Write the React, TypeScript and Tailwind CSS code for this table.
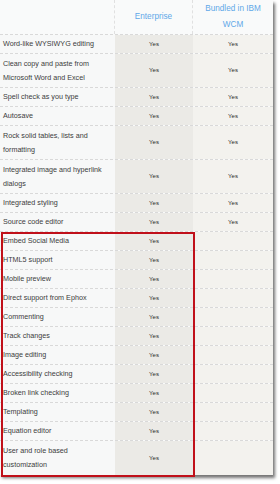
import React from "react";

type Row = { label: string[]; ent: boolean; ibm: boolean };

const top: Row[] = [
  { label: ["Word-like WYSIWYG editing"], ent: true, ibm: true },
  { label: ["Clean copy and paste from", "Microsoft Word and Excel"], ent: true, ibm: true },
  { label: ["Spell check as you type"], ent: true, ibm: true },
  { label: ["Autosave"], ent: true, ibm: true },
  { label: ["Rock solid tables, lists and", "formatting"], ent: true, ibm: true },
  { label: ["Integrated image and hyperlink", "dialogs"], ent: true, ibm: true },
  { label: ["Integrated styling"], ent: true, ibm: true },
  { label: ["Source code editor"], ent: true, ibm: true },
];

const bottom: Row[] = [
  "Embed Social Media",
  "HTML5 support",
  "Mobile preview",
  "Direct support from Ephox",
  "Commenting",
  "Track changes",
  "Image editing",
  "Accessibility checking",
  "Broken link checking",
  "Templating",
  "Equation editor",
]
  .map((l) => ({ label: [l], ent: true, ibm: false }))
  .concat([{ label: ["User and role based", "customization"], ent: true, ibm: false }]);

function TableRow({ row, last }: { row: Row; last?: boolean }) {
  const tall = row.label.length > 1;
  return (
    <div
      className={`flex ${tall ? "h-[34px]" : "h-[19px]"} ${
        last ? "" : "border-b border-dashed border-[#d9d9d9]"
      }`}
    >
      <div className="flex w-[115px] flex-col justify-center bg-[#f7f8f8] pl-[3px] text-[7.2px] leading-[14px] text-[#3c3c3c]">
        {row.label.map((l) => (
          <div key={l} className="whitespace-nowrap">
            {l}
          </div>
        ))}
      </div>
      <div className="flex w-[78px] items-center justify-center bg-[#ebeae6] text-[6px] text-[#2a2a2a]">
        {row.ent ? "Yes" : ""}
      </div>
      <div className="flex flex-1 items-center justify-center bg-[#f3f2ee] text-[6px] text-[#2a2a2a]">
        {row.ibm ? "Yes" : ""}
      </div>
    </div>
  );
}

export default function App() {
  return (
    <div className="h-[484px] w-[280px] bg-white" style={{ fontFamily: '"Liberation Sans", Arial, sans-serif' }}>
      <div className="w-[273px] bg-[#f9fafa] shadow-[2px_3px_3px_rgba(0,0,0,0.55)]">
        <div className="flex h-[35px] border-b border-dashed border-[#d9d9d9] bg-[#f9fafa] text-[8.2px] text-[#5fa8e8]">
          <div className="w-[115px] border-r border-dashed border-[#e0e0e0]" />
          <div className="flex w-[78px] items-center justify-center border-r border-dashed border-[#e0e0e0]">
            Enterprise
          </div>
          <div className="flex flex-1 flex-col items-center justify-center leading-[16px]">
            <div>Bundled in IBM</div>
            <div>WCM</div>
          </div>
        </div>
        {top.map((r) => (
          <TableRow key={r.label[0]} row={r} />
        ))}
        <div className="relative">
          {bottom.map((r, i) => (
            <TableRow key={r.label[0]} row={r} last={i === bottom.length - 1} />
          ))}
          <div className="pointer-events-none absolute bottom-[-2px] left-[1px] top-[0px] w-[194px] border-2 border-[#c0101a]" />
        </div>
      </div>
    </div>
  );
}
